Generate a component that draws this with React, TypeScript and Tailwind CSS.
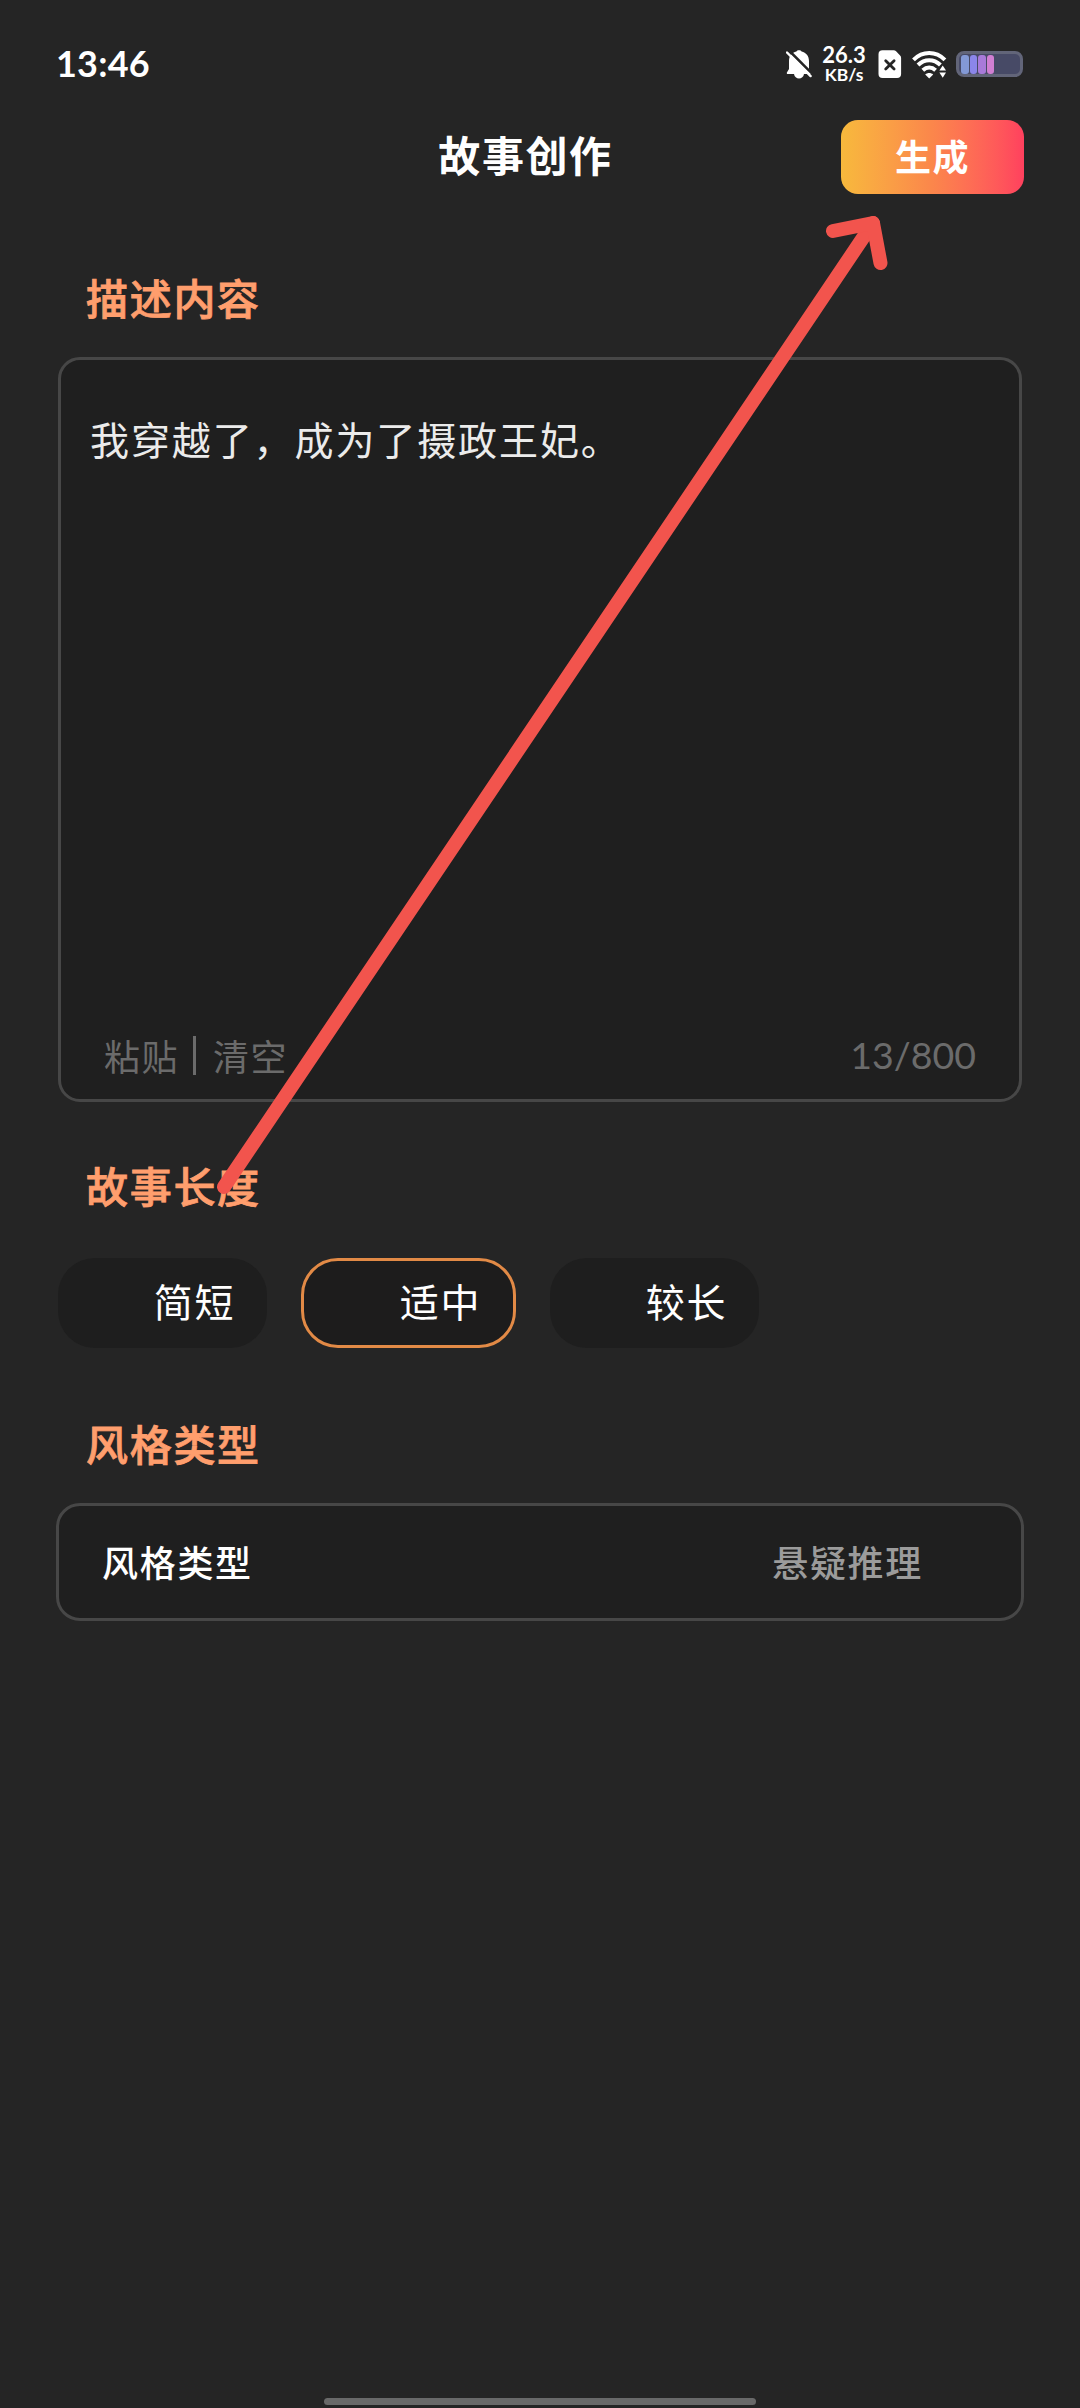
import type { ReactNode } from "react";

const cjk = "font-['Noto_Sans_CJK_SC',sans-serif]";

function BellOff() {
  return (
    <svg width="26" height="30" viewBox="0 0 26 30" className="shrink-0">
      <path
        d="M13 .2c1.200 0 2.200.5 2.600 1.400 4.500 1 7.400 4.600 7.400 9.400v8l2.100 3.500c.4.800 0 1.600-.9 1.600H1.800c-.9 0-1.300-.8-.9-1.600L3 19v-8c0-4.800 2.900-8.400 7.400-9.400.4-.9 1.400-1.400 2.600-1.400z"
        fill="#fff"
      />
      <path d="M8 24h10c-.5 2.800-2.500 4.500-5 4.500S8.500 26.800 8 24z" fill="#fff" />
      <path d="M2.800 .3 27.800 25.300" stroke="#252525" strokeWidth="2.600" />
      <path d="M1 2.500 24.600 26.100" stroke="#fff" strokeWidth="2.400" strokeLinecap="round" />
    </svg>
  );
}

function SimOff() {
  return (
    <svg width="24" height="29" viewBox="0 0 24 29" className="shrink-0">
      <path d="M4.500.2h11.200c1 0 1.700.4 2.400 1.100l4 4.200c.7.700 1 1.400 1 2.400V24c0 2.500-1.500 4-4 4H4.500c-2.500 0-4-1.500-4-4V4.200c0-2.500 1.500-4 4-4z" fill="#fff" />
      <path d="m7.700 10.700 8.400 8.400m0-8.400-8.400 8.400" stroke="#252525" strokeWidth="2.800" strokeLinecap="round" />
    </svg>
  );
}

function Wifi() {
  return (
    <svg width="35" height="29" viewBox="0 0 35 29" className="shrink-0">
      <g fill="none" stroke="#fff" strokeWidth="4">
        <path d="M1.500 9.800C10.600.7 23.800.7 32.900 9.800" />
        <path d="M6 15c6.600-6.500 15.800-6.500 22.400 0" />
        <path d="M10.800 20.300c3.900-3.600 8.900-3.600 12.800 0" />
      </g>
      <path d="M13.200 24.600c2.300-2 5.700-2 8 0L17.200 28.600z" fill="#fff" />
      <path d="M30.700 13.500 35.500 21.500h-9.600z" fill="#252525" />
      <path d="M30.700 15.500 34 20.500h-6.600z" fill="#fff" />
      <path d="M30.700 27.800 34 22.600h-6.600z" fill="#fff" />
    </svg>
  );
}

function Battery() {
  return (
    <div className="flex h-[26px] w-[67px] shrink-0 items-center gap-px rounded-lg border-[3px] border-[#626579] bg-[#474a66] pl-[2px]">
      <div className="h-[19px] w-[7.500px] rounded-[3px] bg-[#8399d6]" />
      <div className="h-[19px] w-[7.500px] rounded-[3px] bg-[#8b86ea]" />
      <div className="h-[19px] w-[7.500px] rounded-[3px] bg-[#a87ad9]" />
      <div className="h-[19px] w-[7.500px] rounded-[3px] bg-[#d07fd2]" />
    </div>
  );
}

function StatusBar() {
  return (
    <div className="flex h-[120px] items-start justify-between pl-14 pr-[57px] font-['Lato',sans-serif] text-white">
      <span className="pt-[45px] text-[36px] leading-[36px] font-bold tracking-[0.2px]">13:46</span>
      <div className="flex pt-[50px]">
        <BellOff />
        <div className="-mt-[6px] ml-[9px] flex w-[46px] flex-col items-center font-bold">
          <span className="text-[22px] leading-[22px]">26.3</span>
          <span className="text-[17.500px] leading-[18px]">KB/s</span>
        </div>
        <div className="ml-[11px]"><SimOff /></div>
        <div className="ml-[10px]"><Wifi /></div>
        <div className="mt-px ml-[9px]"><Battery /></div>
      </div>
    </div>
  );
}

function SectionTitle({ children }: { children: ReactNode }) {
  return (
    <h2 className="pl-[86px] text-[42px] leading-[44px] font-medium tracking-[1.700px] text-[#ff9e6d] [-webkit-text-stroke:0.8px_#ff9e6d]">
      {children}
    </h2>
  );
}

function LengthOption({ label, selected = false }: { label: string; selected?: boolean }) {
  return (
    <button
      className={
        selected
          ? "flex h-[90px] w-[215px] items-center justify-end rounded-[37px] border-[3px] border-[#e28a46] bg-[#1d1c1c] pr-[32px] pb-[7px] text-[39px] leading-[40px] tracking-[1.600px]"
          : "flex h-[90px] w-[209px] items-center justify-end rounded-[37px] bg-[#1e1e1e] pr-[32px] pb-[7px] text-[39px] leading-[40px] tracking-[1.600px]"
      }
    >
      {label}
    </button>
  );
}

function Arrow() {
  return (
    <svg className="pointer-events-none absolute top-0 left-0" width="1080" height="1300" viewBox="0 0 1080 1300">
      <g fill="none" stroke="#f2544d" strokeLinecap="round" strokeLinejoin="round" strokeWidth="14">
        <path d="M224 1187 873 223" />
        <path d="M833 231 873 223 880.500 263" />
      </g>
    </svg>
  );
}

export default function App() {
  return (
    <main className={`relative flex h-[2408px] w-[1080px] flex-col overflow-hidden bg-[#252525] text-white ${cjk}`}>
      <StatusBar />
      <header className="grid h-[74px] grid-cols-[1fr_auto_1fr] items-center pr-14">
        <h1 className="col-start-2 pb-[7px] pl-[27px] text-[42px] leading-[44px] font-bold tracking-[1.600px]">故事创作</h1>
        <button className="h-[74px] w-[183px] justify-self-end rounded-[17px] bg-linear-to-r from-[#f7b93c] via-[#fb864b] to-[#ff405e] pb-[4px] text-[36px] leading-[36px] font-bold tracking-[1.500px]">
          生成
        </button>
      </header>

      <section className="mt-[81px]">
        <SectionTitle>描述内容</SectionTitle>
        <div className="mx-[58px] mt-[38px] flex h-[745px] flex-col justify-between rounded-[22px] border-[3px] border-[#474747] bg-[#1f1f1f] pt-[56px] pr-[43px] pb-[24px] pl-[29px]">
          <p className="text-[39px] leading-[44px] tracking-[1.900px] text-[#ebebeb]">我穿越了，成为了摄政王妃。</p>
          <div className="flex items-center justify-between pl-[14px] text-[#6b6b6b]">
            <span className="flex items-center text-[36px] leading-[40px] tracking-[1.500px]">
              粘贴<span className="mr-[17px] ml-[14px] h-[39px] w-[3px] bg-[#6b6b6b]" />清空
            </span>
            <span className="font-['Lato',sans-serif] text-[37.500px] leading-[40px]">13/800</span>
          </div>
        </div>
      </section>

      <section className="mt-[61px]">
        <SectionTitle>故事长度</SectionTitle>
        <div className="mt-[51px] flex gap-[34px] pl-[58px]">
          <LengthOption label="简短" />
          <LengthOption label="适中" selected />
          <LengthOption label="较长" />
        </div>
      </section>

      <section className="mt-[73px]">
        <SectionTitle>风格类型</SectionTitle>
        <div className="mx-14 mt-[38px] flex h-[118px] items-center justify-between rounded-[24px] border-[3px] border-[#474747] bg-[#1f1f1f] pr-[98px] pb-[3px] pl-[43px] text-[36px] leading-[40px] font-medium tracking-[1.700px]">
          <span>风格类型</span>
          <span className="text-[#9b9b9b]">悬疑推理</span>
        </div>
      </section>

      <div className="mx-auto mt-auto mb-[3px] h-[7px] w-[432px] rounded-full bg-[#696969]" />
      <Arrow />
    </main>
  );
}
